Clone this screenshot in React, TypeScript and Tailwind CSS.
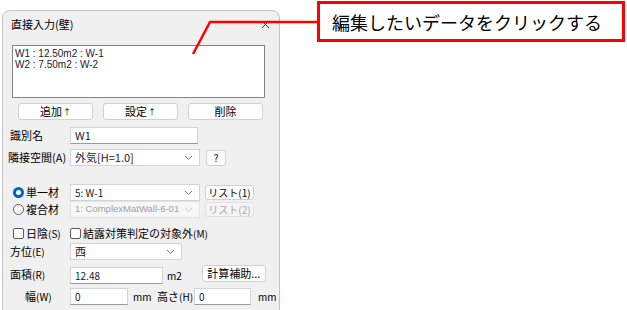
import React from "react";

const FONT = "font-['Noto_Sans_CJK_JP','Noto_Sans',sans-serif]";
const LATIN = "font-['Liberation_Sans','Noto_Sans_CJK_JP',sans-serif]";

function Chevron({ disabled }: { disabled?: boolean }) {
  return (
    <svg width="9" height="6" viewBox="0 0 9 6" className="shrink-0">
      <polyline
        points="1,1 4.5,4.5 8,1"
        fill="none"
        stroke={disabled ? "#c8c8c8" : "#777"}
        strokeWidth="1"
      />
    </svg>
  );
}

type BoxProps = {
  children?: React.ReactNode;
  className?: string;
  disabled?: boolean;
};

function Btn({ children, className = "", disabled }: BoxProps) {
  return (
    <div
      className={`flex items-center justify-center whitespace-nowrap rounded-[3px] border ${
        disabled
          ? "border-[#e0e0e0] bg-[#f5f5f5] text-[#a8a8a8]"
          : "border-[#d0d0d0] bg-[#fdfdfd] text-black"
      } ${className}`}
    >
      {children}
    </div>
  );
}

function Select({ children, className = "", disabled }: BoxProps) {
  return (
    <div
      className={`flex items-center justify-between pl-[4px] pr-[6px] border ${
        disabled
          ? "border-[#e2e2e2] bg-[#f7f7f7] text-[#a0a0a0]"
          : "border-[#d4d4d4] bg-white text-[#1a1a2e]"
      } ${className}`}
    >
      <span className="whitespace-nowrap overflow-hidden">{children}</span>
      <Chevron disabled={disabled} />
    </div>
  );
}

function Input({ children, className = "" }: BoxProps) {
  return (
    <div
      className={`flex items-center pl-[4px] border border-[#d4d4d4] border-b-[#9a9a9a] bg-white text-[#1a1a2e] ${className}`}
    >
      {children}
    </div>
  );
}

function Radio({ checked }: { checked?: boolean }) {
  return checked ? (
    <span className="w-[11px] h-[11px] rounded-full bg-[#0067c0] flex items-center justify-center shrink-0">
      <span className="w-[5px] h-[5px] rounded-full bg-white" />
    </span>
  ) : (
    <span className="w-[11px] h-[11px] rounded-full border border-[#5a5a5a] bg-white shrink-0" />
  );
}

function Check() {
  return <span className="w-[11px] h-[11px] rounded-[2px] border border-[#5a5a5a] bg-white shrink-0" />;
}

function M({ children }: { children: React.ReactNode }) {
  return <span className="text-[10px]">{children}</span>;
}

function Up() {
  return <span className="text-[8px] ml-[1px]">↑</span>;
}

export default function App() {
  return (
    <div className={`relative w-[627px] h-[310px] overflow-hidden bg-white text-[11px] text-black ${FONT}`}>
      <div className="ml-[2px] mt-[10px] w-[278px] h-[320px] flex flex-col bg-[#f0f0f0] border border-[#c4c4c4] rounded-t-[8px]">
        <div className="h-[27px] flex items-center justify-between pl-[8px] pr-[9px] text-[11px]">
          <span>直接入力(壁)</span>
          <svg width="9" height="9" viewBox="0 0 9 9">
            <path d="M1 1 L8 8 M8 1 L1 8" stroke="#333" strokeWidth="1" />
          </svg>
        </div>

        <div
          className={`ml-[9px] mt-[7px] w-[253px] h-[53px] bg-white border border-[#838383] pl-[2px] pt-[2px] leading-[11px] text-[#1a1a2e] text-[10px] ${LATIN}`}
        >
          <div>W1 : 12.50m2 : W-1</div>
          <div>W2 : 7.50m2 : W-2</div>
        </div>

        <div className="ml-[15px] mt-[5px] h-[17px] flex gap-[10px]">
          <Btn className="w-[75px]">
            追加<Up />
          </Btn>
          <Btn className="w-[75px]">
            設定<Up />
          </Btn>
          <Btn className="w-[75px]">削除</Btn>
        </div>

        <div className="mt-[7px] h-[17px] flex items-center pl-[7px]">
          <span className="w-[60px]">識別名</span>
          <Input className="w-[128px] h-[17px]">W1</Input>
        </div>

        <div className="mt-[5px] h-[17px] flex items-center pl-[5px]">
          <span className="w-[62px]">隣接空間(A)</span>
          <Select className="w-[130px] h-[17px]">外気[H=1.0]</Select>
          <Btn className="ml-[6px] w-[20px] h-[16px] text-[10px]">?</Btn>
        </div>

        <div className="mt-[18px] h-[17px] flex items-center pl-[10px]">
          <div className="w-[57px] flex items-center gap-[2px]">
            <Radio checked />
            <span>単一材</span>
          </div>
          <Select className="w-[130px] h-[17px] text-[10px]">5: W-1</Select>
          <Btn className="ml-[5px] w-[49px] h-[15px] text-[10px]">リスト(1)</Btn>
        </div>

        <div className="h-[17px] flex items-center pl-[10px]">
          <div className="w-[57px] flex items-center gap-[2px]">
            <Radio />
            <span>複合材</span>
          </div>
          <Select disabled className={`w-[130px] h-[17px] text-[9.5px] ${LATIN}`}>
            1: ComplexMatWall-6-01
          </Select>
          <Btn disabled className="ml-[5px] w-[49px] h-[15px] text-[10px]">
            リスト(2)
          </Btn>
        </div>

        <div className="mt-[7px] h-[16px] flex items-center pl-[10px]">
          <div className="w-[57px] flex items-center gap-[2px]">
            <Check />
            <span>
              日陰<M>(S)</M>
            </span>
          </div>
          <div className="flex items-center gap-[2px]">
            <Check />
            <span>
              結露対策判定の対象外<M>(M)</M>
            </span>
          </div>
        </div>

        <div className="mt-[2px] h-[17px] flex items-center pl-[7px]">
          <span className="w-[60px]">
            方位<M>(E)</M>
          </span>
          <Select className="w-[112px] h-[17px]">西</Select>
        </div>

        <div className="mt-[5px] h-[19px] flex pl-[7px]">
          <span className="w-[60px] self-center">
            面積<M>(R)</M>
          </span>
          <Input className="w-[93px] h-[17px] self-end text-[10px]">12.48</Input>
          <span className="ml-[4px] self-end mb-[1px] text-[10px]">m2</span>
          <Btn className="ml-[20px] w-[64px] h-[17px] self-start">計算補助...</Btn>
        </div>

        <div className="mt-[4px] h-[17px] flex items-center pl-[22px]">
          <span className="w-[45px]">
            幅<M>(W)</M>
          </span>
          <Input className="w-[58px] h-[17px] text-[10px]">0</Input>
          <span className="ml-[5px] w-[24px] text-[10px]">mm</span>
          <span className="w-[37px]">
            高さ<M>(H)</M>
          </span>
          <Input className="w-[57px] h-[17px] text-[10px]">0</Input>
          <span className="ml-[7px] text-[10px]">mm</span>
        </div>
      </div>

      <svg className="absolute left-0 top-0 pointer-events-none" width="627" height="310">
        <polyline points="193,54 210,22 318,22" fill="none" stroke="#ff0000" strokeWidth="2.5" />
      </svg>

      <div className="absolute left-[317px] top-[1px] w-[308px] h-[41px] border-[3px] border-[#ff0000] bg-white flex items-center pl-[12px] text-[18px] leading-none text-black">
        編集したいデータをクリックする
      </div>
    </div>
  );
}
